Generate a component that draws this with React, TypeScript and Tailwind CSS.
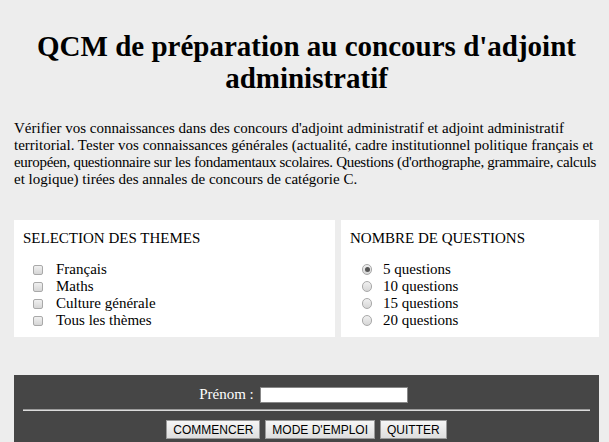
import React from "react";

const themes = ["Français", "Maths", "Culture générale", "Tous les thèmes"];
const counts = ["5 questions", "10 questions", "15 questions", "20 questions"];

function Box() {
  return (
    <span className="inline-block w-[10px] h-[10px] rounded-[2px] border border-[#a9a9a9] bg-gradient-to-b from-[#f0f0f0] to-[#d6d6d6]" />
  );
}

function Radio({ checked }: { checked?: boolean }) {
  return (
    <span className="inline-flex items-center justify-center w-[11px] h-[11px] rounded-full border border-[#a9a9a9] bg-gradient-to-b from-[#f0f0f0] to-[#d6d6d6]">
      {checked && <span className="w-[5px] h-[5px] rounded-full bg-[#555]" />}
    </span>
  );
}

export default function App() {
  return (
    <div className="min-h-screen bg-[#ededed] pl-[14px] pt-[30px] text-black font-[family-name:Liberation_Serif,Times_New_Roman,serif]">
      <h1 className="mr-[10px] text-center font-bold text-[29px] leading-[32px]">
        QCM de préparation au concours d'adjoint administratif
      </h1>

      <p className="mt-[26px] text-[15px] leading-[17px] whitespace-nowrap">
        Vérifier vos connaissances dans des concours d'adjoint administratif et adjoint administratif
        <br />
        territorial. Tester vos connaissances générales (actualité, cadre institutionnel politique français et
        <br />
        <span className="tracking-[-0.3px]">
          européen, questionnaire sur les fondamentaux scolaires. Questions (d'orthographe, grammaire, calculs
        </span>
        <br />
        et logique) tirées des annales de concours de catégorie C.
      </p>

      <div className="mt-[32px] mr-[10px] flex gap-[6px]">
        {/* themes */}
        <div className="w-[321px] h-[117px] bg-white px-[9px] pt-[10px] text-[15px] leading-[17px]">
          <div>SELECTION DES THEMES</div>
          <div className="mt-[14px]">
            {themes.map((t) => (
              <label key={t} className="flex items-center h-[17px]">
                <span className="w-[22px] pl-[10px] flex items-center">
                  <Box />
                </span>
                <span className="ml-[11px]">{t}</span>
              </label>
            ))}
          </div>
        </div>

        {/* number of questions */}
        <div className="flex-1 h-[117px] bg-white px-[9px] pt-[10px] text-[15px] leading-[17px]">
          <div>NOMBRE DE QUESTIONS</div>
          <div className="mt-[14px]">
            {counts.map((c, i) => (
              <label key={c} className="flex items-center h-[17px]">
                <span className="w-[22px] pl-[12px] flex items-center">
                  <Radio checked={i === 0} />
                </span>
                <span className="ml-[11px]">{c}</span>
              </label>
            ))}
          </div>
        </div>
      </div>

      <div className="mt-[38px] mr-[10px] bg-[#464646] pt-[11px] pb-[6px]">
        <div className="h-[17px] pr-[6px] flex items-center justify-center gap-[6px] text-white text-[15px] leading-[17px]">
          <span>Prénom :</span>
          <input className="w-[148px] h-[16px] p-0 bg-white border border-[#888] outline-none" />
        </div>
        <div className="mx-[9px] mt-[6px] h-[2px] border-t border-[#9a9a9a] bg-[#dcdcdc]" />
        <div className="mt-[9px] flex justify-center gap-[5px] font-[family-name:Liberation_Sans,Arial,sans-serif] text-[12px]">
          {["COMMENCER", "MODE D'EMPLOI", "QUITTER"].map((b) => (
            <button
              key={b}
              className="h-[19px] px-[6px] border border-[#9a9a9a] bg-gradient-to-b from-[#f6f6f6] to-[#dedede] text-black leading-none"
            >
              {b}
            </button>
          ))}
        </div>
      </div>
    </div>
  );
}
